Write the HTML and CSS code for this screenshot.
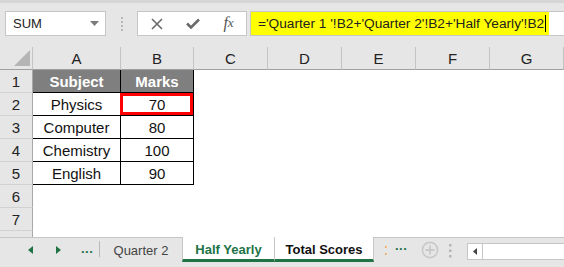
FILE: index.html
```html
<!DOCTYPE html>
<html>
<head>
<meta charset="utf-8">
<link rel="stylesheet" href="styles.css">
</head>
<body>
<div class="app">
  <div class="topline"></div>
  <div class="fbar">
    <div class="namebox">
      <span class="nb-text">SUM</span>
      <svg class="nb-arrow" width="9" height="5" viewBox="0 0 9 5"><path d="M0 0H9L4.5 5Z" fill="#7a7a7a"/></svg>
    </div>
    <svg class="grip" width="2" height="14" viewBox="0 0 2 14">
      <rect x="0" y="0" width="2" height="2" fill="#b8b8b8"/>
      <rect x="0" y="4" width="2" height="2" fill="#b8b8b8"/>
      <rect x="0" y="8" width="2" height="2" fill="#b8b8b8"/>
      <rect x="0" y="12" width="2" height="2" fill="#b8b8b8"/>
    </svg>
    <div class="fbtns">
      <span class="fbtn"><svg width="12" height="12" viewBox="0 0 12 12"><path d="M1 1L11 11M11 1L1 11" stroke="#6a6a6a" stroke-width="1.6" fill="none"/></svg></span>
      <span class="fbtn"><svg width="14" height="11" viewBox="0 0 14 11"><path d="M1 5.5L5 9.5L13 1.5" stroke="#6a6a6a" stroke-width="2.6" fill="none"/></svg></span>
      <span class="fbtn fx">f<span class="fx-x">x</span></span>
    </div>
    <div class="finput">
      <span class="hl">='Quarter 1 '!B2+'Quarter 2'!B2+'Half Yearly'!B2<span class="caret"></span></span>
    </div>
  </div>

  <div class="sheet">
    <div class="grid">
      <div class="corner"><svg class="tri" width="16" height="16" viewBox="0 0 16 16"><path d="M16 0V16H0Z" fill="#b5b5b5"/></svg></div>
      <div class="ch">A</div><div class="ch">B</div><div class="ch">C</div><div class="ch">D</div><div class="ch">E</div><div class="ch">F</div><div class="ch">G</div>

      <div class="rh">1</div>
      <div class="c t th">Subject</div><div class="c t th">Marks</div>
      <div class="c"></div><div class="c"></div><div class="c"></div><div class="c"></div><div class="c"></div>

      <div class="rh">2</div>
      <div class="c t">Physics</div><div class="c t sel">70</div>
      <div class="c"></div><div class="c"></div><div class="c"></div><div class="c"></div><div class="c"></div>

      <div class="rh">3</div>
      <div class="c t">Computer</div><div class="c t">80</div>
      <div class="c"></div><div class="c"></div><div class="c"></div><div class="c"></div><div class="c"></div>

      <div class="rh">4</div>
      <div class="c t">Chemistry</div><div class="c t">100</div>
      <div class="c"></div><div class="c"></div><div class="c"></div><div class="c"></div><div class="c"></div>

      <div class="rh">5</div>
      <div class="c t">English</div><div class="c t">90</div>
      <div class="c"></div><div class="c"></div><div class="c"></div><div class="c"></div><div class="c"></div>

      <div class="rh">6</div>
      <div class="c"></div><div class="c"></div><div class="c"></div><div class="c"></div><div class="c"></div><div class="c"></div><div class="c"></div>

      <div class="rh">7</div>
      <div class="c"></div><div class="c"></div><div class="c"></div><div class="c"></div><div class="c"></div><div class="c"></div><div class="c"></div>

      <div class="rh"></div>
      <div class="c"></div><div class="c"></div><div class="c"></div><div class="c"></div><div class="c"></div><div class="c"></div><div class="c"></div>
    </div>
  </div>

  <div class="tabbar">
    <div class="nav">
      <svg class="arr-l" width="5" height="8" viewBox="0 0 5 8"><path d="M5 0V8L0 4Z" fill="#217346"/></svg>
      <svg class="arr-r" width="5" height="8" viewBox="0 0 5 8"><path d="M0 0V8L5 4Z" fill="#217346"/></svg>
      <span class="gdots">...</span>
    </div>
    <div class="sep"></div>
    <div class="tab">Quarter 2</div>
    <div class="tab wt active">Half Yearly</div>
    <div class="tab wt grp">Total Scores</div>
    <svg class="colon" width="2" height="9" viewBox="0 0 2 9"><rect x="0" y="0" width="1.5" height="2" fill="#f2a65a"/><rect x="0" y="7" width="1.5" height="2" fill="#f2a65a"/></svg>
    <span class="gdots more">...</span>
    <svg class="plus" width="18" height="18" viewBox="0 0 18 18"><circle cx="9" cy="9" r="7.6" stroke="#c9c9c9" stroke-width="1.6" fill="none"/><path d="M9 4.5V13.5M4.5 9H13.5" stroke="#c9c9c9" stroke-width="1.8"/></svg>
    <svg class="vdots" width="3" height="14" viewBox="0 0 3 14"><rect x="0" y="0" width="2.5" height="2.5" fill="#b5b5b5"/><rect x="0" y="5.5" width="2.5" height="2.5" fill="#b5b5b5"/><rect x="0" y="11" width="2.5" height="2.5" fill="#b5b5b5"/></svg>
    <div class="hscroll">
      <div class="sbtn"><svg width="4" height="7" viewBox="0 0 4 7"><path d="M4 0V7L0 3.5Z" fill="#444"/></svg></div>
      <div class="strack"></div>
    </div>
  </div>
</div>
</body>
</html>
```

FILE: styles.css
```css
* { box-sizing: border-box; }
html, body { margin: 0; padding: 0; }
body {
  width: 564px;
  height: 267px;
  overflow: hidden;
  background: #e6e6e6;
  font-family: "Liberation Sans", Arial, sans-serif;
}
.app { width: 564px; height: 267px; display: flex; flex-direction: column; }

.topline { height: 3px; background: #d6d6d6; flex: none; }

.fbar {
  height: 44px;
  flex: none;
  display: flex;
  align-items: flex-start;
  padding-top: 8px;
  background: #e6e6e6;
}
.namebox {
  margin-left: 5px;
  width: 101px;
  height: 25px;
  background: #fff;
  border: 1px solid #c6c6c6;
  display: flex;
  align-items: center;
  padding-left: 7px;
  padding-right: 6px;
  justify-content: space-between;
}
.nb-text { font-size: 13px; color: #222; }
.grip { margin-left: 15px; margin-top: 6px; flex: none; }
.fbtns {
  margin-left: 14px;
  width: 110px;
  height: 25px;
  background: #fff;
  border: 1px solid #c6c6c6;
  display: grid;
  grid-template-columns: 37px 36px 35px;
}
.fbtn { display: flex; align-items: center; justify-content: center; }
.fx {
  font-family: "Liberation Serif", "Times New Roman", serif;
  font-style: italic;
  font-size: 16px;
  color: #555;
  padding-bottom: 2px;
}
.fx-x { font-size: 13px; }
.finput {
  margin-left: 3px;
  flex: 1;
  height: 25px;
  background: #fff;
  border: 1px solid #c6c6c6;
  border-right: none;
  display: flex;
}
.hl {
  background: #ffff00;
  height: 23px;
  display: flex;
  align-items: center;
  padding-left: 7px;
  padding-right: 3px;
  font-size: 13.7px;
  color: #222;
  white-space: pre;
}
.caret { width: 1px; height: 17px; background: #000; margin-left: 1px; }

.sheet {
  height: 190px;
  flex: none;
  overflow: hidden;
  background: #fff;
}
.grid {
  display: grid;
  grid-template-columns: 33px 88px 73px 74px 74px 74px 74px 74px;
  grid-auto-rows: 23px;
  font-size: 15px;
}
.corner {
  background: #e6e6e6;
  border-right: 1px solid #c4c4c4;
  border-bottom: 1px solid #a0a0a0;
  display: flex;
  justify-content: flex-end;
  align-items: flex-end;
  padding: 0 2px 3px 0;
}
.ch {
  background: #e6e6e6;
  border-right: 1px solid #c4c4c4;
  border-bottom: 1px solid #a0a0a0;
  display: flex;
  align-items: center;
  justify-content: center;
  color: #222;
}
.rh {
  background: #e6e6e6;
  border-right: 1px solid #a8a8a8;
  border-bottom: 1px solid #d2d2d2;
  display: flex;
  align-items: center;
  justify-content: center;
  color: #222;
}
.c { background: #fff; display: flex; align-items: center; justify-content: center; color: #111; }
.t { border-right: 1px solid #000; border-bottom: 1px solid #000; }
.th { background: #7f7f7f; color: #fff; font-weight: bold; }
.sel { position: relative; }
.sel::after {
  content: "";
  position: absolute;
  left: -1px;
  top: 0;
  right: 0;
  bottom: 0;
  border: 3px solid #ff0000;
}

.tabbar {
  height: 30px;
  flex: none;
  display: flex;
  align-items: flex-start;
  border-top: 1px solid #c6c6c6;
  background: #e6e6e6;
  font-size: 13px;
}
.nav {
  width: 99px;
  height: 24px;
  display: flex;
  align-items: center;
  padding-left: 28px;
  flex: none;
}
.arr-r { margin-left: 23px; }
.gdots {
  color: #217346;
  font-weight: bold;
  font-size: 13px;
  margin-left: 20px;
  letter-spacing: 0.5px;
  padding-bottom: 4px;
}
.sep { width: 1px; height: 16px; margin-top: 3px; background: #b9b9b9; flex: none; }
.tab {
  height: 24px;
  display: flex;
  align-items: center;
  justify-content: center;
  color: #444;
  flex: none;
  width: 82px;
}
.wt {
  background: #fff;
  margin-top: -1px;
  height: 25px;
  border-left: 1px solid #c6c6c6;
  border-bottom: 3px solid #217346;
  font-weight: bold;
  padding-top: 2px;
}
.active { width: 92px; color: #217346; }
.grp { width: 100px; color: #111; border-right: 1px solid #c6c6c6; }
.colon { margin-left: 11px; margin-top: 8px; flex: none; }
.more { margin-left: 8px; }
.plus { margin-left: 14px; margin-top: 3px; flex: none; }
.vdots { margin-left: 10px; margin-top: 6px; flex: none; }
.hscroll {
  margin-left: 15px;
  margin-top: 5px;
  flex: 1;
  height: 17px;
  display: flex;
  border: 1px solid #c6c6c6;
  border-right: none;
  background: #fff;
}
.sbtn {
  width: 15px;
  border-right: 1px solid #c6c6c6;
  display: flex;
  align-items: center;
  justify-content: center;
  flex: none;
}
.strack { flex: 1; }
```
